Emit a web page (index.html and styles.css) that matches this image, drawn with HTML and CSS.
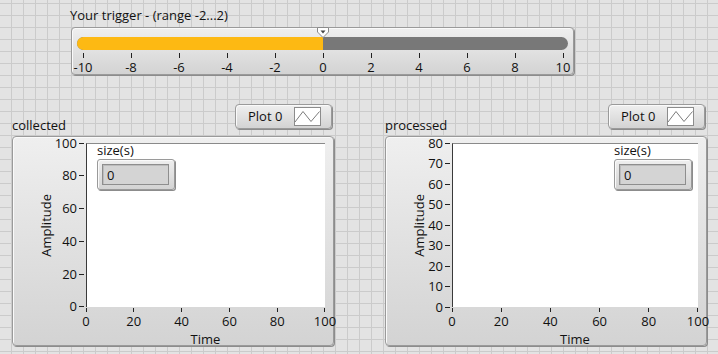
FILE: index.html
```html
<!DOCTYPE html>
<html lang="en">
<head>
    <meta charset="UTF-8">
    <meta name="viewport" content="width=device-width, initial-scale=1.0">
    <title>Trigger Panel</title>
    <link rel="stylesheet" href="styles.css">
</head>
<body>

    <div class="panel">
        <!-- Trigger slider -->
        <div class="slider-group">
            <div class="caption">Your trigger - (range -2...2)</div>
            <div class="slider">
                <div class="thumb">
                    <svg width="12" height="11" viewBox="0 0 12 11">
                        <polygon points="0.5,0.5 11.5,0.5 11.5,5 6,10.5 0.5,5" fill="#fff" stroke="#8a8a8a"/>
                        <polygon points="3.5,3.5 8.5,3.5 6,6.5" fill="#444"/>
                    </svg>
                </div>
                <div class="track"><div class="fill" style="width:50%"></div></div>
                <div class="scale">
                    <div class="mark"><span class="tick"></span><span>-10</span></div>
                    <div class="mark"><span class="tick"></span><span>-8</span></div>
                    <div class="mark"><span class="tick"></span><span>-6</span></div>
                    <div class="mark"><span class="tick"></span><span>-4</span></div>
                    <div class="mark"><span class="tick"></span><span>-2</span></div>
                    <div class="mark"><span class="tick"></span><span>0</span></div>
                    <div class="mark"><span class="tick"></span><span>2</span></div>
                    <div class="mark"><span class="tick"></span><span>4</span></div>
                    <div class="mark"><span class="tick"></span><span>6</span></div>
                    <div class="mark"><span class="tick"></span><span>8</span></div>
                    <div class="mark"><span class="tick"></span><span>10</span></div>
                </div>
            </div>
        </div>

        <!-- Collected graph -->
        <div class="chart chart-collected">
            <div class="chart-head">
                <div class="caption chart-label">collected</div>
                <div class="legend">
                    <span>Plot 0</span>
                    <span class="legend-icon">
                        <svg width="27" height="19" viewBox="0 0 27 19">
                            <polyline points="1,15 9,4.5 17,14.5 25.5,4.5" fill="none" stroke="#7c7c7c" stroke-width="1"/>
                        </svg>
                    </span>
                </div>
            </div>
            <div class="graph">
                <div class="yaxis">
                    <div class="ytitle"><span>Amplitude</span></div>
                    <div class="yscale">
                        <div class="ylabel">100</div>
                        <div class="ylabel">80</div>
                        <div class="ylabel">60</div>
                        <div class="ylabel">40</div>
                        <div class="ylabel">20</div>
                        <div class="ylabel">0</div>
                    </div>
                </div>
                <div class="plot">
                    <div class="size-group">
                        <div class="caption">size(s)</div>
                        <div class="numeric"><div class="numeric-box">0</div></div>
                    </div>
                </div>
                <div class="xscale">
                    <div class="xlabel"><span class="tick"></span><span>0</span></div>
                    <div class="xlabel"><span class="tick"></span><span>20</span></div>
                    <div class="xlabel"><span class="tick"></span><span>40</span></div>
                    <div class="xlabel"><span class="tick"></span><span>60</span></div>
                    <div class="xlabel"><span class="tick"></span><span>80</span></div>
                    <div class="xlabel"><span class="tick"></span><span>100</span></div>
                </div>
                <div class="xtitle">Time</div>
            </div>
        </div>

        <!-- Processed graph -->
        <div class="chart chart-processed">
            <div class="chart-head">
                <div class="caption chart-label">processed</div>
                <div class="legend">
                    <span>Plot 0</span>
                    <span class="legend-icon">
                        <svg width="27" height="19" viewBox="0 0 27 19">
                            <polyline points="1,15 9,4.5 17,14.5 25.5,4.5" fill="none" stroke="#7c7c7c" stroke-width="1"/>
                        </svg>
                    </span>
                </div>
            </div>
            <div class="graph">
                <div class="yaxis">
                    <div class="ytitle"><span>Amplitude</span></div>
                    <div class="yscale">
                        <div class="ylabel">80</div>
                        <div class="ylabel">70</div>
                        <div class="ylabel">60</div>
                        <div class="ylabel">50</div>
                        <div class="ylabel">40</div>
                        <div class="ylabel">30</div>
                        <div class="ylabel">20</div>
                        <div class="ylabel">10</div>
                        <div class="ylabel">0</div>
                    </div>
                </div>
                <div class="plot">
                    <div class="size-group">
                        <div class="caption">size(s)</div>
                        <div class="numeric"><div class="numeric-box">0</div></div>
                    </div>
                </div>
                <div class="xscale">
                    <div class="xlabel"><span class="tick"></span><span>0</span></div>
                    <div class="xlabel"><span class="tick"></span><span>20</span></div>
                    <div class="xlabel"><span class="tick"></span><span>40</span></div>
                    <div class="xlabel"><span class="tick"></span><span>60</span></div>
                    <div class="xlabel"><span class="tick"></span><span>80</span></div>
                    <div class="xlabel"><span class="tick"></span><span>100</span></div>
                </div>
                <div class="xtitle">Time</div>
            </div>
        </div>
    </div>

</body>
</html>
```
FILE: styles.css
```css
/* General Styling */
body {
    margin: 0;
    padding: 0;
    font-family: 'Open Sans', 'Liberation Sans', Arial, sans-serif;
    font-size: 13px;
    line-height: 15px;
    color: #111;
}

.panel {
    position: relative;
    width: 718px;
    height: 354px;
    overflow: hidden;
    background-color: #e3e3e3;
    background-image:
        linear-gradient(to right, #cbcbcb 1px, transparent 1px),
        linear-gradient(to bottom, #cbcbcb 1px, transparent 1px);
    background-size: 12px 12px;
    background-position: 11px 3px;
}

.caption {
    white-space: nowrap;
}

/* Raised LabVIEW style frame */
.slider,
.graph,
.legend,
.numeric {
    box-sizing: border-box;
    border: 1px solid #9a9a9a;
    border-radius: 4px;
    background: linear-gradient(#efefef, #d3d3d3);
    box-shadow: inset 1px 1px 0 #fafafa, 1px 1px 0 #8c8c8c;
}

/* Trigger slider */
.slider-group {
    position: absolute;
    left: 70px;
    top: 8px;
}

.slider-group .caption {
    height: 19px;
}

.slider {
    position: relative;
    width: 503px;
    height: 48px;
    margin-left: 1px;
    padding: 9px 5px 0;
}

.thumb {
    position: absolute;
    left: 245px;
    top: -1px;
    line-height: 0;
}

.track {
    height: 13px;
    border-radius: 7px;
    background-color: #787878;
    overflow: hidden;
}

.track .fill {
    height: 100%;
    background-color: #fdb913;
}

.scale {
    display: flex;
    justify-content: space-between;
    margin: 3px 5px 0 6px;
}

.mark,
.xlabel {
    width: 0;
    display: flex;
    flex-direction: column;
    align-items: center;
}

.mark .tick {
    width: 1px;
    height: 5px;
    background-color: #222;
    margin-bottom: 2px;
}

/* Graphs */
.chart {
    position: absolute;
    top: 104px;
}

.chart-collected {
    left: 12px;
    width: 322px;
}

.chart-processed {
    left: 385px;
    width: 322px;
}

.chart-head {
    display: flex;
    justify-content: space-between;
    height: 32px;
}

.chart-label {
    margin-top: 14px;
}

.legend {
    display: flex;
    align-items: center;
    gap: 12px;
    width: 97px;
    height: 25px;
    margin-right: 2px;
    padding-left: 12px;
}

.legend-icon {
    width: 27px;
    height: 19px;
    background: #fff;
    box-sizing: border-box;
    border: 1px solid #8c8c8c;
    line-height: 0;
}

.legend-icon svg {
    margin: -1px;
}

.graph {
    height: 210px;
    display: grid;
    grid-template-columns: 73px 1fr 8px;
    grid-template-rows: 6px 164px 25px 1fr;
}

.chart-processed .graph {
    grid-template-columns: 66px 1fr 8px;
}

.yaxis {
    grid-column: 1;
    grid-row: 2;
    display: flex;
}

.ytitle {
    width: 40px;
    padding-left: 26px;
    box-sizing: border-box;
    display: flex;
    align-items: center;
}

.ytitle span {
    writing-mode: vertical-rl;
    transform: rotate(180deg);
    white-space: nowrap;
}

.yscale {
    flex: 1;
    display: flex;
    flex-direction: column;
    justify-content: space-between;
}

.ylabel {
    height: 0;
    display: flex;
    align-items: center;
    justify-content: flex-end;
}

.ylabel::after {
    content: "";
    width: 5px;
    height: 1px;
    margin: 0 2px 0 2px;
    background-color: #222;
}

.plot {
    grid-column: 2;
    grid-row: 2;
    position: relative;
    background-color: #fff;
    border-left: 1px solid #3a3a3a;
    border-top: 1px solid #8a8a8a;
}

.xscale {
    grid-column: 2;
    grid-row: 3;
    display: flex;
    justify-content: space-between;
}

.xlabel .tick {
    width: 1px;
    height: 4px;
    margin: 1px 0 2px;
    background-color: #222;
}

.xtitle {
    grid-column: 2;
    grid-row: 4;
    text-align: center;
}

/* size(s) indicator */
.size-group {
    position: absolute;
    top: -1px;
    left: 10px;
}

.chart-processed .size-group {
    left: auto;
    right: 6px;
}

.size-group .caption {
    height: 16px;
}

.numeric {
    width: 78px;
    height: 31px;
    padding: 4px 5px 4px 4px;
    border-radius: 3px;
}

.numeric-box {
    height: 100%;
    box-sizing: border-box;
    border: 1px solid #8e8e8e;
    background-color: #d4d4d4;
    box-shadow: inset 1px 1px 0 #bcbcbc;
    padding: 3px 0 0 4px;
}
```
